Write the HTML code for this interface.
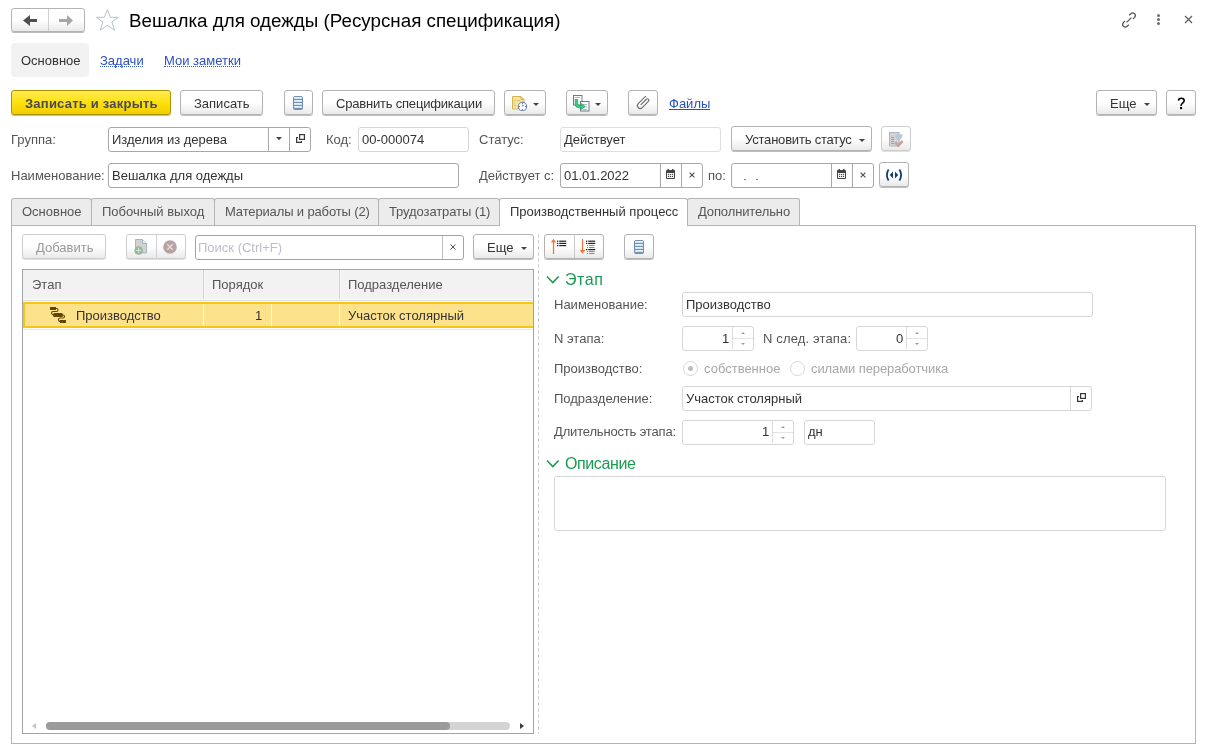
<!DOCTYPE html>
<html><head><meta charset="utf-8">
<style>
*{box-sizing:border-box;margin:0;padding:0}
html,body{width:1210px;height:754px;overflow:hidden;background:#fff;font-family:"Liberation Sans",sans-serif;font-size:13px;color:#555}
.a{position:absolute}
.t{position:absolute;white-space:nowrap;line-height:16px;font-size:13px;will-change:transform}
.v{color:#333}
.b{position:absolute;height:25px;border:1px solid #b3b3b3;border-radius:3px;background:linear-gradient(#fff 0%,#fff 48%,#eaeaea 100%);box-shadow:0 1px 0 rgba(0,0,0,.26)}
.bd{border-color:#cdcdcd;box-shadow:0 1px 0 rgba(0,0,0,.12)}
.i{position:absolute;height:25px;border:1px solid #a8a8a8;border-radius:3px;background:#fff}
.il{position:absolute;height:25px;border:1px solid #d6d6d6;border-radius:3px;background:#fff}
.vl{position:absolute;width:1px;background:#a8a8a8}
.tab{position:absolute;top:198px;height:28px;border:1px solid #b4b4b4;border-bottom:none;border-radius:3px 3px 0 0;background:#ececec}
.tri{position:absolute;width:0;height:0;border-left:3px solid transparent;border-right:3px solid transparent;border-top:3px solid #444}
.lnk{color:#2a50c0;border-bottom:1px dotted #2452b5}
</style></head><body>

<!-- ===== Header ===== -->
<div class="b" style="left:11px;top:8px;width:74px;height:24px"></div>
<div class="a" style="left:48px;top:9px;width:1px;height:22px;background:#cfcfcf"></div>
<svg class="a" style="left:22px;top:13px" width="16" height="15" viewBox="0 0 16 15"><path d="M1 7.5 L8 2 L8 6 L15 6 L15 9 L8 9 L8 13 Z" fill="#505050"/></svg>
<svg class="a" style="left:58px;top:13px" width="16" height="15" viewBox="0 0 16 15"><path d="M15 7.5 L9 2 L9 6 L1 6 L1 9 L9 9 L9 13 Z" fill="#a6a6a6"/></svg>
<svg class="a" style="left:95px;top:8px" width="25" height="24" viewBox="0 0 25 24"><path d="M12.4 1.6 L15.3 9.3 L23.3 9.3 L16.9 14 L19.5 22.2 L12.4 17.3 L5.3 22.2 L7.9 14 L1.5 9.3 L9.5 9.3 Z" fill="none" stroke="#b9c0c7" stroke-width="1"/></svg>
<div class="t" style="left:129px;top:9px;font-size:18.8px;line-height:24px;color:#000">Вешалка для одежды (Ресурсная спецификация)</div>

<svg class="a" style="left:1120px;top:11px" width="18" height="18" viewBox="0 0 18 18"><g fill="none" stroke="#555" stroke-width="1.25" stroke-linecap="butt"><path d="M9.2 4.3 L10.8 2.7 Q12.6 0.9 14.6 2.7 Q16.3 4.6 14.6 6.4 L13 8"/><path d="M8.8 13.7 L7.2 15.3 Q5.4 17.1 3.4 15.3 Q1.7 13.4 3.4 11.6 L5 10"/><path d="M6.6 11.4 L11.4 6.6"/></g></svg>
<div class="a" style="left:1157px;top:14px;width:3px;height:3px;border-radius:50%;background:#707070;box-shadow:0 4px 0 #707070,0 8px 0 #707070"></div>
<svg class="a" style="left:1184px;top:15px" width="9" height="9" viewBox="0 0 9 9"><path d="M1 1 L8 8 M8 1 L1 8" stroke="#555" stroke-width="1.1"/></svg>

<!-- ===== Form nav ===== -->
<div class="a" style="left:11px;top:43px;width:78px;height:34px;background:#f2f2f2;border-radius:4px"></div>
<div class="t v" style="left:21px;top:53px">Основное</div>
<div class="t" style="left:100px;top:53px;color:#2a50c0">Задачи</div>
<div class="a" style="left:100px;top:66px;width:43px;border-top:1px dotted #3558c4"></div>
<div class="t" style="left:164px;top:53px;color:#2a50c0">Мои заметки</div>
<div class="a" style="left:164px;top:66px;width:76px;border-top:1px dotted #3558c4"></div>

<!-- ===== Command bar ===== -->
<div class="b" style="left:11px;top:90px;width:160px;border-color:#ad9300;background:linear-gradient(#ffeb55 0%,#ffe10f 50%,#f1cd00 100%);box-shadow:0 1px 0 rgba(90,70,0,.35)"></div>
<div class="t" style="left:25px;top:96px;font-weight:bold;letter-spacing:0.22px;color:#4a4a50">Записать и закрыть</div>
<div class="b" style="left:180px;top:90px;width:83px"></div>
<div class="t v" style="left:194px;top:96px">Записать</div>
<div class="b" style="left:284px;top:90px;width:29px"></div>
<svg class="a" style="left:293px;top:96px" width="10" height="14" viewBox="0 0 10 14"><rect x="0" y="0" width="10" height="14" rx="2" fill="#7191ae"/><g fill="#cfe2f2"><rect x="1" y="1" width="8" height="2"/><rect x="1" y="4" width="8" height="2"/><rect x="1" y="7" width="8" height="2"/><rect x="1" y="10" width="8" height="2"/></g><g fill="#e6f1fa"><rect x="2" y="1" width="6" height="1"/><rect x="2" y="4" width="6" height="1"/><rect x="2" y="7" width="6" height="1"/><rect x="2" y="10" width="6" height="1"/></g></svg>
<div class="b" style="left:322px;top:90px;width:173px"></div>
<div class="t v" style="left:336px;top:96px;letter-spacing:-0.2px">Сравнить спецификации</div>
<div class="b" style="left:504px;top:90px;width:42px"></div>
<svg class="a" style="left:511px;top:95px" width="17" height="16" viewBox="0 0 17 16"><path d="M1.5 1.5 L10 1.5 L13 4.5 L13 14 L1.5 14 Z" fill="#f6e49a" stroke="#d4b455" stroke-width="1"/><path d="M10 1.5 L10 4.5 L13 4.5" fill="none" stroke="#d4b455"/><g fill="#d9c170"><rect x="3" y="5" width="2" height="1"/><rect x="6" y="5" width="3" height="1"/><rect x="3" y="7.5" width="1" height="1"/><rect x="3" y="10" width="2" height="1"/></g><circle cx="11.5" cy="11.5" r="4.2" fill="#fff" stroke="#5d8bbd" stroke-width="1.1"/><g fill="#e02020"><rect x="11" y="7.8" width="1" height="1"/><rect x="11" y="14.2" width="1" height="1"/><rect x="7.8" y="11" width="1" height="1"/><rect x="14.2" y="11" width="1" height="1"/></g><path d="M11.5 11.5 L11.5 9.5 M11.5 11.5 L13 10" stroke="#7b9ccc" stroke-width=".8"/></svg>
<div class="tri" style="left:533px;top:103px"></div>
<div class="b" style="left:566px;top:90px;width:42px"></div>
<svg class="a" style="left:573px;top:95px" width="17" height="17" viewBox="0 0 17 17"><rect x="0.5" y="0.5" width="8.5" height="9.5" fill="#fff" stroke="#6c7a8a"/><rect x="7.5" y="6.5" width="8.5" height="9.5" fill="#fff" stroke="#6c7a8a"/><g fill="#9aa6b4"><rect x="2" y="2" width="5" height="0.8"/><rect x="10" y="9" width="4" height="0.8"/><rect x="10" y="11.5" width="4" height="0.8"/><rect x="10" y="14" width="4" height="0.8"/></g><path d="M4.5 4.5 L4.5 8.5 Q4.5 10.5 6.5 10.5 L8.5 10.5 L8.5 8.5 L12 11.5 L8.5 14.5 L8.5 12.8 L6 12.8 Q2.2 12.8 2.2 9 L2.2 4.5 Z" fill="#2fd37a" stroke="#12a552" stroke-width=".7"/></svg>
<div class="tri" style="left:595px;top:103px"></div>
<div class="b" style="left:628px;top:90px;width:30px"></div>
<svg class="a" style="left:628px;top:88px" width="30" height="28" viewBox="0 0 30 28"><path transform="translate(15.2,14.6) rotate(-45)" d="M6.4 -2.8 L-4.2 -2.8 A2.8 2.8 0 0 0 -4.2 2.8 L4.6 2.8 A1.45 1.45 0 0 0 4.6 -0.1 L-3.4 -0.1" fill="none" stroke="#6f6f6f" stroke-width="1.15"/></svg>
<div class="t" style="left:669px;top:96px;color:#2a50c0">Файлы</div>
<div class="a" style="left:669px;top:109px;width:41px;height:1px;background:#2a50c0"></div>

<div class="b" style="left:1096px;top:90px;width:61px"></div>
<div class="t v" style="left:1110px;top:96px">Еще</div>
<div class="tri" style="left:1144px;top:103px"></div>
<div class="b" style="left:1166px;top:90px;width:30px"></div>
<svg class="a" style="left:1176px;top:96px" width="11" height="14" viewBox="0 0 11 14"><path d="M2.5 4.6 Q2.6 2.2 5.4 2.2 Q8.2 2.2 8.2 4.6 Q8.2 6 6.6 7.1 Q5 8.2 5 10" fill="none" stroke="#000" stroke-width="1.55"/><rect x="4" y="11" width="2.1" height="2.1" fill="#000"/></svg>

<!-- ===== Row 1 ===== -->
<div class="t" style="left:11px;top:132px">Группа:</div>
<div class="i" style="left:108px;top:127px;width:203px"></div>
<div class="vl" style="left:268px;top:128px;height:23px"></div>
<div class="vl" style="left:289px;top:128px;height:23px"></div>
<svg class="a" style="left:276px;top:137px" width="6" height="4" viewBox="0 0 6 4"><path d="M0 0 H6 L3 3.2 Z" fill="#444"/></svg>
<svg class="a" style="left:295px;top:133px" width="11" height="11" viewBox="0 0 11 11"><path d="M3 4.6 L1.6 4.6 L1.6 9.4 L6.4 9.4 L6.4 8" fill="none" stroke="#383838" stroke-width="1.2"/><rect x="4.6" y="1.6" width="4.8" height="4.8" fill="none" stroke="#383838" stroke-width="1.2"/></svg>
<div class="t v" style="left:112px;top:132px">Изделия из дерева</div>
<div class="t" style="left:326px;top:132px">Код:</div>
<div class="il" style="left:358px;top:127px;width:111px;height:25px"></div>
<div class="t v" style="left:362px;top:132px">00-000074</div>
<div class="t" style="left:479px;top:132px">Статус:</div>
<div class="il" style="left:560px;top:127px;width:161px;height:25px;border-color:#dedede"></div>
<div class="t v" style="left:564px;top:132px">Действует</div>
<div class="b" style="left:731px;top:126px;width:141px"></div>
<div class="t v" style="left:745px;top:132px;letter-spacing:-0.2px">Установить статус</div>
<div class="tri" style="left:859px;top:139px"></div>
<div class="b bd" style="left:881px;top:126px;width:30px"></div>
<svg class="a" style="left:888px;top:131px" width="16" height="17" viewBox="0 0 16 17"><rect x="1.5" y="1.5" width="9.5" height="13.5" fill="#d3d3d3" stroke="#a9b7c6"/><g fill="#8fa2b6"><rect x="3" y="6" width="3" height="1"/><rect x="3" y="8" width="3" height="1"/><rect x="3" y="10" width="3" height="1"/><rect x="3" y="12" width="3" height="1"/></g><path d="M7 5.5 L9.5 2.5 L11.5 3.5 L14.5 3 L14 6.5 L11.5 9.5 L9 8.5 Z" fill="#b7c8d7"/><path d="M7.3 11.2 L10.2 14.6 L14.6 10" fill="none" stroke="#c7a0a0" stroke-width="2.6"/></svg>

<!-- ===== Row 2 ===== -->
<div class="t" style="left:11px;top:168px">Наименование:</div>
<div class="i" style="left:108px;top:163px;width:351px"></div>
<div class="t v" style="left:112px;top:168px">Вешалка для одежды</div>
<div class="t" style="left:479px;top:168px">Действует с:</div>
<div class="i" style="left:560px;top:163px;width:143px"></div>
<div class="vl" style="left:660px;top:164px;height:23px"></div>
<div class="vl" style="left:681px;top:164px;height:23px"></div>
<svg class="a" style="left:666px;top:169px" width="9" height="10" viewBox="0 0 9 10"><rect x="0" y="1" width="9" height="9" rx="1" fill="#444"/><rect x="1" y="4" width="7" height="5" fill="#fff"/><g fill="#444"><rect x="1.9" y="4.9" width="1.2" height="1.2"/><rect x="3.9" y="4.9" width="1.2" height="1.2"/><rect x="5.9" y="4.9" width="1.2" height="1.2"/><rect x="1.9" y="6.9" width="1.2" height="1.2"/><rect x="3.9" y="6.9" width="1.2" height="1.2"/><rect x="5.9" y="6.9" width="1.2" height="1.2"/></g><rect x="1.5" y="0" width="1.5" height="2" fill="#444"/><rect x="6" y="0" width="1.5" height="2" fill="#444"/></svg>
<svg class="a" style="left:689px;top:172px" width="6" height="6" viewBox="0 0 6 6"><path d="M0.6 0.6 L5.4 5.4 M5.4 0.6 L0.6 5.4" stroke="#555" stroke-width="1.2"/></svg>
<div class="t v" style="left:564px;top:168px">01.01.2022</div>
<div class="t" style="left:708px;top:168px">по:</div>
<div class="i" style="left:731px;top:163px;width:143px"></div>
<div class="vl" style="left:831px;top:164px;height:23px"></div>
<div class="vl" style="left:852px;top:164px;height:23px"></div>
<svg class="a" style="left:837px;top:169px" width="9" height="10" viewBox="0 0 9 10"><rect x="0" y="1" width="9" height="9" rx="1" fill="#444"/><rect x="1" y="4" width="7" height="5" fill="#fff"/><g fill="#444"><rect x="1.9" y="4.9" width="1.2" height="1.2"/><rect x="3.9" y="4.9" width="1.2" height="1.2"/><rect x="5.9" y="4.9" width="1.2" height="1.2"/><rect x="1.9" y="6.9" width="1.2" height="1.2"/><rect x="3.9" y="6.9" width="1.2" height="1.2"/><rect x="5.9" y="6.9" width="1.2" height="1.2"/></g><rect x="1.5" y="0" width="1.5" height="2" fill="#444"/><rect x="6" y="0" width="1.5" height="2" fill="#444"/></svg>
<svg class="a" style="left:860px;top:172px" width="6" height="6" viewBox="0 0 6 6"><path d="M0.6 0.6 L5.4 5.4 M5.4 0.6 L0.6 5.4" stroke="#555" stroke-width="1.2"/></svg>
<div class="a" style="left:744px;top:179px;width:2px;height:1px;background:#8a7f80"></div><div class="a" style="left:756px;top:179px;width:2px;height:1px;background:#8a7f80"></div>
<div class="b" style="left:879px;top:162px;width:30px"></div>
<svg class="a" style="left:885px;top:169px" width="18" height="12" viewBox="0 0 18 12"><path d="M3.6 0.5 Q1.9 3 1.9 6 Q1.9 9 3.6 11.5" fill="none" stroke="#0d3f6e" stroke-width="1.8"/><path d="M14.4 0.5 Q16.1 3 16.1 6 Q16.1 9 14.4 11.5" fill="none" stroke="#0d3f6e" stroke-width="1.8"/><path d="M8 2.5 L4.8 6 L8 9.5 Z" fill="#0d3f6e"/><path d="M10 2.5 L13.2 6 L10 9.5 Z" fill="#0d3f6e"/></svg>

<!-- ===== Tabs ===== -->
<div class="tab" style="left:11px;width:81px"></div>
<div class="t" style="left:22px;top:204px">Основное</div>
<div class="tab" style="left:91px;width:124px"></div>
<div class="t" style="left:102px;top:204px">Побочный выход</div>
<div class="tab" style="left:214px;width:165px"></div>
<div class="t" style="left:225px;top:204px;letter-spacing:-0.14px">Материалы и работы (2)</div>
<div class="tab" style="left:378px;width:122px"></div>
<div class="t" style="left:389px;top:204px;letter-spacing:-0.1px">Трудозатраты (1)</div>
<div class="tab" style="left:499px;width:189px;background:#fff;height:28px;z-index:2"></div>
<div class="t v" style="left:510px;top:204px;z-index:3">Производственный процесс</div>
<div class="tab" style="left:687px;width:113px"></div>
<div class="t" style="left:698px;top:204px;letter-spacing:-0.12px">Дополнительно</div>
<div class="a" style="left:11px;top:225px;width:1185px;height:519px;border:1px solid #b4b4b4;z-index:1"></div>

<!-- ===== Left toolbar ===== -->
<div class="b bd" style="left:22px;top:234px;width:84px"></div>
<div class="t" style="left:36px;top:240px;color:#999">Добавить</div>
<div class="b bd" style="left:126px;top:234px;width:60px"></div>
<div class="a" style="left:156px;top:235px;width:1px;height:23px;background:#d0d0d0"></div>
<svg class="a" style="left:134px;top:239px" width="14" height="16" viewBox="0 0 14 16"><path d="M1.5 0.5 L8.5 0.5 L12.5 4.5 L12.5 14 L1.5 14 Z" fill="#d2d2d2" stroke="#a9b5c2"/><path d="M8.5 0.5 L8.5 4.5 L12.5 4.5" fill="#eee" stroke="#a9b5c2"/><circle cx="4.7" cy="11.5" r="4.3" fill="#95b99c"/><path d="M4.7 9 L4.7 14 M2.2 11.5 L7.2 11.5" stroke="#d8e6da" stroke-width="1"/></svg>
<svg class="a" style="left:163px;top:240px" width="14" height="14" viewBox="0 0 14 14"><circle cx="7" cy="7" r="6.8" fill="#b8a3a3"/><path d="M4.3 4.3 L9.7 9.7 M9.7 4.3 L4.3 9.7" stroke="#e4dcdc" stroke-width="1.4"/></svg>
<div class="i" style="left:195px;top:235px;width:269px;border-color:#a3a3a3"></div>
<div class="a" style="left:442px;top:236px;width:1px;height:23px;background:#c0c0c0"></div>
<svg class="a" style="left:450px;top:244px" width="6" height="6" viewBox="0 0 6 6"><path d="M0.5 0.5 L5.5 5.5 M5.5 0.5 L0.5 5.5" stroke="#555" stroke-width="1"/></svg>
<div class="t" style="left:198px;top:240px;color:#bdbdcc">Поиск (Ctrl+F)</div>
<div class="b" style="left:473px;top:234px;width:61px"></div>
<div class="t v" style="left:487px;top:240px">Еще</div>
<div class="tri" style="left:521px;top:247px"></div>

<!-- ===== Table ===== -->
<div class="a" style="left:22px;top:269px;width:512px;height:465px;border:1px solid #a4a4a4"></div>
<div class="a" style="left:23px;top:270px;width:510px;height:29px;background:#f2f2f2"></div>
<div class="a" style="left:23px;top:300px;width:510px;height:1px;background:#dadada"></div>
<div class="a" style="left:203px;top:270px;width:1px;height:29px;background:#d2d2d2"></div>
<div class="a" style="left:204px;top:270px;width:1px;height:29px;background:#fafafa"></div>
<div class="a" style="left:339px;top:270px;width:1px;height:29px;background:#d2d2d2"></div>
<div class="a" style="left:340px;top:270px;width:1px;height:29px;background:#fafafa"></div>
<div class="t" style="left:32px;top:277px">Этап</div>
<div class="t" style="left:212px;top:277px">Порядок</div>
<div class="t" style="left:348px;top:277px">Подразделение</div>
<div class="a" style="left:23px;top:302px;width:510px;height:26px;background:#fde28c;border:2px solid #f7c514;border-right:none"></div>
<div class="a" style="left:203px;top:304px;width:1px;height:22px;background:#fffbea"></div>
<div class="a" style="left:271px;top:304px;width:1px;height:22px;background:#fffbea"></div>
<div class="a" style="left:339px;top:304px;width:1px;height:22px;background:#fffbea"></div>
<div class="a" style="left:23px;top:329px;width:510px;height:1px;background:#eaeaea"></div>
<svg class="a" style="left:46px;top:303px" width="24" height="24" viewBox="0 0 24 24"><g fill="#5f4700"><rect x="4" y="4" width="6" height="3"/><rect x="7" y="10" width="10" height="4" rx="1.6"/><rect x="14" y="17" width="6" height="3"/></g><g fill="none" stroke="#5f4700" stroke-width="1.1"><path d="M9.5 5.5 H10.5 Q12 5.5 12 7 Q12 8.5 10.5 8.5 H7 Q5.5 8.5 5.5 10 Q5.5 11.5 7 11.5 H8"/><path d="M16.5 12 H17 Q18.5 12 18.5 13.5 Q18.5 15 17 15 H14 Q12.5 15 12.5 16.5 Q12.5 18.5 14.5 18.5"/></g></svg>
<div class="t v" style="left:76px;top:308px">Производство</div>
<div class="t v" style="left:255px;top:308px">1</div>
<div class="t v" style="left:348px;top:308px">Участок столярный</div>
<div class="a" style="left:46px;top:722px;width:464px;height:8px;border-radius:4px;background:#d4d4d4"></div>
<div class="a" style="left:46px;top:722px;width:404px;height:8px;border-radius:4px;background:#9b9b9b"></div>
<div class="a" style="left:32px;top:723px;width:0;height:0;border-top:3px solid transparent;border-bottom:3px solid transparent;border-right:4px solid #c4c4c4"></div>
<div class="a" style="left:520px;top:723px;width:0;height:0;border-top:3px solid transparent;border-bottom:3px solid transparent;border-left:4px solid #3c3c3c"></div>
<div class="a" style="left:538px;top:234px;width:1px;height:500px;background:repeating-linear-gradient(#d2d2d2 0 4px,transparent 4px 6px)"></div>

<!-- ===== Right toolbar ===== -->
<div class="b" style="left:544px;top:234px;width:60px"></div>
<div class="a" style="left:574px;top:235px;width:1px;height:23px;background:#c8c8c8"></div>
<svg class="a" style="left:550px;top:238px" width="18" height="17" viewBox="0 0 18 17"><path d="M3.5 16 L3.5 3" stroke="#f07b3c" stroke-width="1.3"/><path d="M0.8 4.5 L3.5 0.8 L6.2 4.5 Z" fill="#f07b3c"/><g fill="#222"><rect x="7" y="2.6" width="1.3" height="1.3"/><rect x="7" y="4.8" width="1.3" height="1.3"/><rect x="7" y="7" width="1.3" height="1.3"/><rect x="9.2" y="2.6" width="7" height="1.2"/><rect x="9.2" y="4.8" width="7" height="1.2"/><rect x="9.2" y="7" width="7" height="1.2"/></g></svg>
<svg class="a" style="left:579px;top:238px" width="18" height="17" viewBox="0 0 18 17"><path d="M3.5 1 L3.5 13" stroke="#f07b3c" stroke-width="1.3"/><path d="M0.8 12 L3.5 15.8 L6.2 12 Z" fill="#f07b3c"/><g fill="#222"><rect x="7" y="2.6" width="1.3" height="1.3"/><rect x="9.2" y="2.6" width="7" height="1.2"/><rect x="7" y="4.8" width="1.3" height="1.3"/><rect x="9.2" y="4.8" width="7" height="1.2"/><rect x="7" y="11" width="1.3" height="1.3"/><rect x="9.2" y="11" width="7" height="1.2"/></g><g fill="#888"><rect x="8" y="7" width="1" height="1"/><rect x="10" y="7" width="5.5" height="1"/><rect x="8" y="9" width="1" height="1"/><rect x="10" y="9" width="5.5" height="1"/><rect x="8" y="13" width="1" height="1"/><rect x="10" y="13" width="5.5" height="1"/><rect x="8" y="15" width="1" height="1"/><rect x="10" y="15" width="5.5" height="1"/></g></svg>
<div class="b" style="left:624px;top:234px;width:30px"></div>
<svg class="a" style="left:634px;top:240px" width="10" height="14" viewBox="0 0 10 14"><rect x="0" y="0" width="10" height="14" rx="2" fill="#7191ae"/><g fill="#cfe2f2"><rect x="1" y="1" width="8" height="2"/><rect x="1" y="4" width="8" height="2"/><rect x="1" y="7" width="8" height="2"/><rect x="1" y="10" width="8" height="2"/></g><g fill="#e6f1fa"><rect x="2" y="1" width="6" height="1"/><rect x="2" y="4" width="6" height="1"/><rect x="2" y="7" width="6" height="1"/><rect x="2" y="10" width="6" height="1"/></g></svg>

<!-- ===== Этап group ===== -->
<svg class="a" style="left:546px;top:275px" width="14" height="10" viewBox="0 0 14 10"><path d="M1 1.5 L6.8 7.6 L12.6 1.5" fill="none" stroke="#1b9a52" stroke-width="1.5"/></svg>
<div class="t" style="left:565px;top:270px;font-size:16px;line-height:20px;letter-spacing:0.6px;color:#1b9a52">Этап</div>
<div class="t" style="left:554px;top:297px">Наименование:</div>
<div class="il" style="left:682px;top:292px;width:411px"></div>
<div class="t v" style="left:686px;top:297px">Производство</div>

<div class="t" style="left:554px;top:331px">N этапа:</div>
<div class="il" style="left:682px;top:326px;width:72px"></div>
<div class="a" style="left:732px;top:327px;width:1px;height:22px;background:#dcdcdc"></div>
<div class="a" style="left:733px;top:338px;width:20px;height:1px;background:#e4e4e4"></div>
<div class="t v" style="left:722px;top:331px">1</div><div class="a" style="left:741px;top:332px;width:0;height:0;border-left:2px solid transparent;border-right:2px solid transparent;border-bottom:2px solid #9a9a9a"></div><div class="a" style="left:741px;top:343px;width:0;height:0;border-left:2px solid transparent;border-right:2px solid transparent;border-top:2px solid #9a9a9a"></div>
<div class="t" style="left:763px;top:331px;letter-spacing:0.15px">N след. этапа:</div>
<div class="il" style="left:856px;top:326px;width:72px"></div>
<div class="a" style="left:906px;top:327px;width:1px;height:22px;background:#dcdcdc"></div>
<div class="a" style="left:907px;top:338px;width:20px;height:1px;background:#e4e4e4"></div>
<div class="t v" style="left:896px;top:331px">0</div><div class="a" style="left:915px;top:332px;width:0;height:0;border-left:2px solid transparent;border-right:2px solid transparent;border-bottom:2px solid #9a9a9a"></div><div class="a" style="left:915px;top:343px;width:0;height:0;border-left:2px solid transparent;border-right:2px solid transparent;border-top:2px solid #9a9a9a"></div>

<div class="t" style="left:554px;top:361px">Производство:</div>
<div class="a" style="left:683px;top:361px;width:15px;height:15px;border-radius:50%;border:1px solid #d6d6d6"></div>
<div class="a" style="left:688px;top:366px;width:5px;height:5px;border-radius:50%;background:#bdbdbd"></div>
<div class="t" style="left:704px;top:361px;color:#a8a8a8">собственное</div>
<div class="a" style="left:790px;top:361px;width:15px;height:15px;border-radius:50%;border:1px solid #d6d6d6"></div>
<div class="t" style="left:811px;top:361px;color:#a8a8a8;letter-spacing:-0.1px">силами переработчика</div>

<div class="t" style="left:554px;top:391px">Подразделение:</div>
<div class="il" style="left:682px;top:386px;width:410px"></div>
<div class="a" style="left:1070px;top:387px;width:1px;height:23px;background:#d6d6d6"></div>
<svg class="a" style="left:1076px;top:392px" width="11" height="11" viewBox="0 0 11 11"><path d="M3 4.6 L1.6 4.6 L1.6 9.4 L6.4 9.4 L6.4 8" fill="none" stroke="#383838" stroke-width="1.2"/><rect x="4.6" y="1.6" width="4.8" height="4.8" fill="none" stroke="#383838" stroke-width="1.2"/></svg>
<div class="t v" style="left:686px;top:391px">Участок столярный</div>

<div class="t" style="left:554px;top:424px;letter-spacing:-0.17px">Длительность этапа:</div>
<div class="il" style="left:682px;top:420px;width:112px"></div>
<div class="a" style="left:772px;top:421px;width:1px;height:22px;background:#dcdcdc"></div>
<div class="a" style="left:773px;top:432px;width:20px;height:1px;background:#e4e4e4"></div>
<div class="t v" style="left:762px;top:424px">1</div><div class="a" style="left:781px;top:426px;width:0;height:0;border-left:2px solid transparent;border-right:2px solid transparent;border-bottom:2px solid #9a9a9a"></div><div class="a" style="left:781px;top:437px;width:0;height:0;border-left:2px solid transparent;border-right:2px solid transparent;border-top:2px solid #9a9a9a"></div>
<div class="il" style="left:804px;top:420px;width:71px"></div>
<div class="t v" style="left:808px;top:424px">дн</div>

<!-- ===== Описание ===== -->
<svg class="a" style="left:546px;top:459px" width="14" height="10" viewBox="0 0 14 10"><path d="M1 1.5 L6.8 7.6 L12.6 1.5" fill="none" stroke="#1b9a52" stroke-width="1.5"/></svg>
<div class="t" style="left:565px;top:454px;font-size:16px;line-height:20px;letter-spacing:-0.4px;color:#1b9a52">Описание</div>
<div class="a" style="left:554px;top:476px;width:612px;height:55px;border:1px solid #d6d6d6;border-radius:3px"></div>
</body></html>
